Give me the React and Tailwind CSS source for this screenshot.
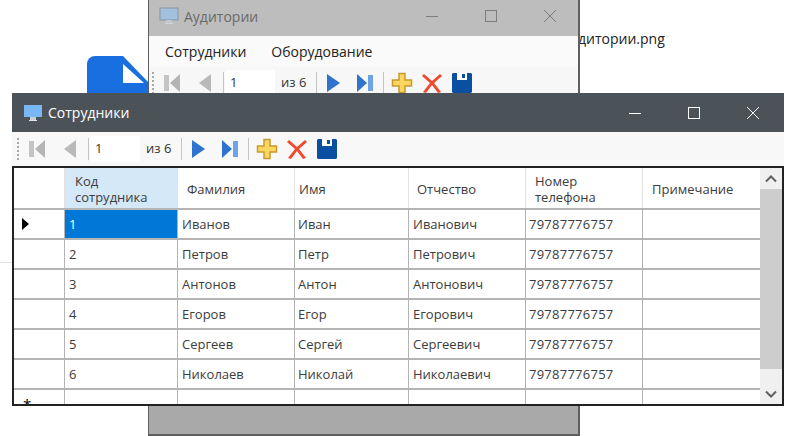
const font = { fontFamily: "'Open Sans', 'Noto Sans', sans-serif" }

const Monitor = ({ dim }) => (
  <svg width="20" height="20" viewBox="0 0 20 20" className={dim ? "opacity-60" : ""}>
    <rect x="1" y="2" width="18" height="12" fill={dim ? "#8fc4f5" : "#7ab8f5"} stroke={dim ? "#6b7b8c" : "none"} />
    <rect x="7" y="14" width="6" height="3" fill="#c9ced3" />
    <rect x="6" y="17" width="8" height="1" fill="#e4e6e8" />
  </svg>
)

const WinControls = ({ color, gap }) => (
  <div className={`flex items-center ${gap}`}>
    <svg width="14" height="14" viewBox="0 0 14 14">
      <path d="M1 7.500h12" stroke={color} strokeWidth="1" />
    </svg>
    <svg width="14" height="14" viewBox="0 0 14 14">
      <rect x="1.500" y="1.500" width="11" height="11" fill="none" stroke={color} strokeWidth="1" />
    </svg>
    <svg width="14" height="14" viewBox="0 0 14 14">
      <path d="M1 1l12 12M13 1L1 13" stroke={color} strokeWidth="1" />
    </svg>
  </div>
)

const Grip = () => (
  <div className="flex flex-col gap-[2px] mr-[6px]">
    {[0, 1, 2, 3, 4, 5].map((i) => (
      <div key={i} className="w-[2px] h-[2px] bg-[#a8a8a8]" />
    ))}
  </div>
)

const Sep = () => <div className="w-px h-[22px] bg-[#c4c4c4]" />

const First = () => (
  <svg width="18" height="20" viewBox="0 0 18 20">
    <rect x="1" y="2" width="5" height="16" fill="#c4c4c4" />
    <path d="M17 1v18L7 10z" fill="#b4b4b4" />
  </svg>
)
const Prev = () => (
  <svg width="14" height="20" viewBox="0 0 14 20">
    <path d="M13 1v18L1 10z" fill="#b9b9b9" />
  </svg>
)
const Next = () => (
  <svg width="14" height="20" viewBox="0 0 14 20">
    <path d="M0 1v18l13-9z" fill="#2f73d0" />
  </svg>
)
const Last = () => (
  <svg width="18" height="20" viewBox="0 0 18 20">
    <path d="M1 1v18l10-9z" fill="#2f73d0" />
    <rect x="12" y="2" width="5" height="16" fill="#6fa3e6" />
  </svg>
)
const Plus = () => (
  <svg width="22" height="22" viewBox="0 0 22 22">
    <path d="M8 1.500h6v6.500h6.500v6H14v6.500H8V14H1.500V8H8z" fill="#fcd660" stroke="#c79a2c" strokeWidth="1.500" />
  </svg>
)
const Cross = () => (
  <svg width="22" height="22" viewBox="0 0 22 22">
    <path d="M3 2l8 7 8-7 2 2-8 7 7 9-3 1-6-8-6 8-3-1 7-9-8-7z" fill="#ef4a2d" />
  </svg>
)
const Save = () => (
  <svg width="20" height="20" viewBox="0 0 20 20">
    <path d="M1 0h18l1 1v18l-1 1H1l-1-1V1z" fill="#0b4fa3" />
    <rect x="5" y="0" width="10" height="7" fill="#fff" />
    <rect x="10" y="1" width="3" height="4" fill="#0b4fa3" />
  </svg>
)

const Toolbar = ({ inset }) => (
  <div className={`flex items-center h-full ${inset}`}>
    <Grip />
    <div className="flex items-center gap-[17px] ml-[3px] w-[60px]">
      <First />
      <Prev />
    </div>
    <Sep />
    <div className="w-[50px] h-[26px] bg-white text-[13px] text-[#333] pl-[5px] ml-px flex items-center">1</div>
    <div className="text-[13px] text-[#333] ml-[6px] w-[35px]">из 6</div>
    <Sep />
    <div className="flex items-center gap-[15px] ml-[10px] mr-[9px]">
      <Next />
      <Last />
    </div>
    <Sep />
    <div className="flex items-center gap-[8px] ml-[7px]">
      <Plus />
      <Cross />
      <div className="ml-px">
        <Save />
      </div>
    </div>
  </div>
)

const columns = [
  ["w-[51px]", "", "pl-[9px]"],
  ["w-[113px]", "Код сотрудника", "pl-[10px]"],
  ["w-[117px]", "Фамилия", "pl-[9px]"],
  ["w-[114px]", "Имя", "pl-[4px]"],
  ["w-[117px]", "Отчество", "pl-[8px]"],
  ["w-[117px]", "Номер телефона", "pl-[9px]"],
  ["w-[118px]", "Примечание", "pl-[9px]"],
]

const rows = [
  ["1", "Иванов", "Иван", "Иванович"],
  ["2", "Петров", "Петр", "Петрович"],
  ["3", "Антонов", "Антон", "Антонович"],
  ["4", "Егоров", "Егор", "Егорович"],
  ["5", "Сергеев", "Сергей", "Сергеевич"],
  ["6", "Николаев", "Николай", "Николаевич"],
]

const Cell = ({ width, className = "", children }) => (
  <div className={`${width} shrink-0 h-full border-r border-[#b4b4b4] flex items-center text-[13px] leading-[16px] text-[#3c3c3c] ${className}`}>
    {children}
  </div>
)

const Grid = () => (
  <div className="flex-1 min-w-0 flex flex-col overflow-hidden">
    <div className="flex h-[42px] shrink-0 border-b-2 border-[#b4b4b4]">
      {columns.map(([w, title, pad], i) => (
        <div
          key={i}
          className={`${w} ${pad} shrink-0 h-full flex items-center border-r border-[#e2e2e2] pt-px pr-[30px] text-[13px] leading-[16px] text-[#3c3c3c] ${
            i === 1 ? "bg-[#d5e8f8]" : ""
          }`}
        >
          {title}
        </div>
      ))}
    </div>
    {rows.map((r, i) => (
      <div key={i} className="flex h-[30px] shrink-0 border-b-2 border-[#b4b4b4]">
        <Cell width={columns[0][0]} className="pl-[8px]">
          {i === 0 && (
            <svg width="7" height="12" viewBox="0 0 7 12">
              <path d="M0 0l7 6-7 6z" fill="#000" />
            </svg>
          )}
        </Cell>
        <Cell width={columns[1][0]} className={`pl-[4px] ${i === 0 ? "bg-[#0078d7] text-white" : ""}`}>
          {r[0]}
        </Cell>
        <Cell width={columns[2][0]} className="pl-[4px]">{r[1]}</Cell>
        <Cell width={columns[3][0]} className="pl-[3px]">{r[2]}</Cell>
        <Cell width={columns[4][0]} className="pl-[4px]">{r[3]}</Cell>
        <Cell width={columns[5][0]} className="pl-[3px] tracking-[0.25px]">79787776757</Cell>
        <Cell width={columns[6][0]} />
      </div>
    ))}
    <div className="flex h-[30px] shrink-0">
      <Cell width={columns[0][0]} className="pl-[9px] items-start pt-[6px] text-black text-[15px]">*</Cell>
      {columns.slice(1).map(([w], i) => (
        <Cell key={i} width={w} />
      ))}
    </div>
  </div>
)

const Scrollbar = () => (
  <div className="w-[22px] shrink-0 flex flex-col bg-[#f0f0f0]">
    <div className="h-[21px] flex items-center justify-center">
      <svg width="12" height="8" viewBox="0 0 12 8">
        <path d="M1 6.500l5-5 5 5" fill="none" stroke="#606060" strokeWidth="2" />
      </svg>
    </div>
    <div className="h-[180px] bg-[#cdcdcd]" />
    <div className="flex-1" />
    <div className="h-[20px] flex items-center justify-center">
      <svg width="12" height="8" viewBox="0 0 12 8">
        <path d="M1 1.500l5 5 5-5" fill="none" stroke="#606060" strokeWidth="2" />
      </svg>
    </div>
  </div>
)

export default function App() {
  return (
    <div className="relative w-[792px] h-[436px] overflow-hidden bg-white" style={font}>
      {/* desktop file behind the windows */}
      <div className="absolute left-[87px] top-[56px] w-[62px] h-[40px]">
        <svg width="62" height="40" viewBox="0 0 62 40">
          <path d="M8 0h28l26 27v13H0V8a8 8 0 0 1 8-8z" fill="#1a6fe0" />
          <path d="M36 8l21 19H36z" fill="#fff" />
        </svg>
      </div>
      <div className="absolute left-[578px] top-[30px] text-[14px] leading-[18px] text-[#222]">дитории.png</div>
      <div className="absolute left-0 top-[262px] w-[12px] h-px bg-[#e4e4e4]" />

      {/* back window */}
      <div className="absolute left-[148px] top-0 w-[432px] h-[436px] flex flex-col border-r-2 border-b-2 border-l border-[#5f5f5f] bg-[#a9a9a9]">
        <div className="h-[36px] shrink-0 bg-[#bdbdbd] flex items-center justify-between pl-[10px] pr-[21px] pb-[4px]">
          <div className="flex items-center gap-[5px]">
            <Monitor dim />
            <span className="text-[14px] text-[#6a6a6a]">Аудитории</span>
          </div>
          <WinControls color="#7d7d7d" gap="gap-[45px]" />
        </div>
        <div className="h-[30px] shrink-0 bg-[#fafafa] flex items-center gap-[25px] pl-[16px] text-[14px] text-[#222]">
          <span>Сотрудники</span>
          <span>Оборудование</span>
        </div>
        <div className="h-[30px] shrink-0 bg-[#f7f7f7] pt-[4px]">
          <Toolbar inset="pl-[3px]" />
        </div>
      </div>

      {/* front window */}
      <div className="absolute left-[12px] top-[93px] w-[772px] h-[313px] flex flex-col bg-[#f5f5f5]">
        <div className="h-[39px] shrink-0 bg-[#4b5359] flex items-center justify-between pl-[11px] pr-[24px]">
          <div className="flex items-center gap-[5px]">
            <Monitor />
            <span className="text-[14px] text-white">Сотрудники</span>
          </div>
          <WinControls color="#fff" gap="gap-[45px]" />
        </div>
        <div className="h-[34px] shrink-0 bg-[#f8f8f8]">
          <Toolbar inset="pl-[5px]" />
        </div>
        <div className="flex-1 min-h-0 flex border-2 border-[#222] bg-white">
          <Grid />
          <Scrollbar />
        </div>
      </div>
    </div>
  )
}
